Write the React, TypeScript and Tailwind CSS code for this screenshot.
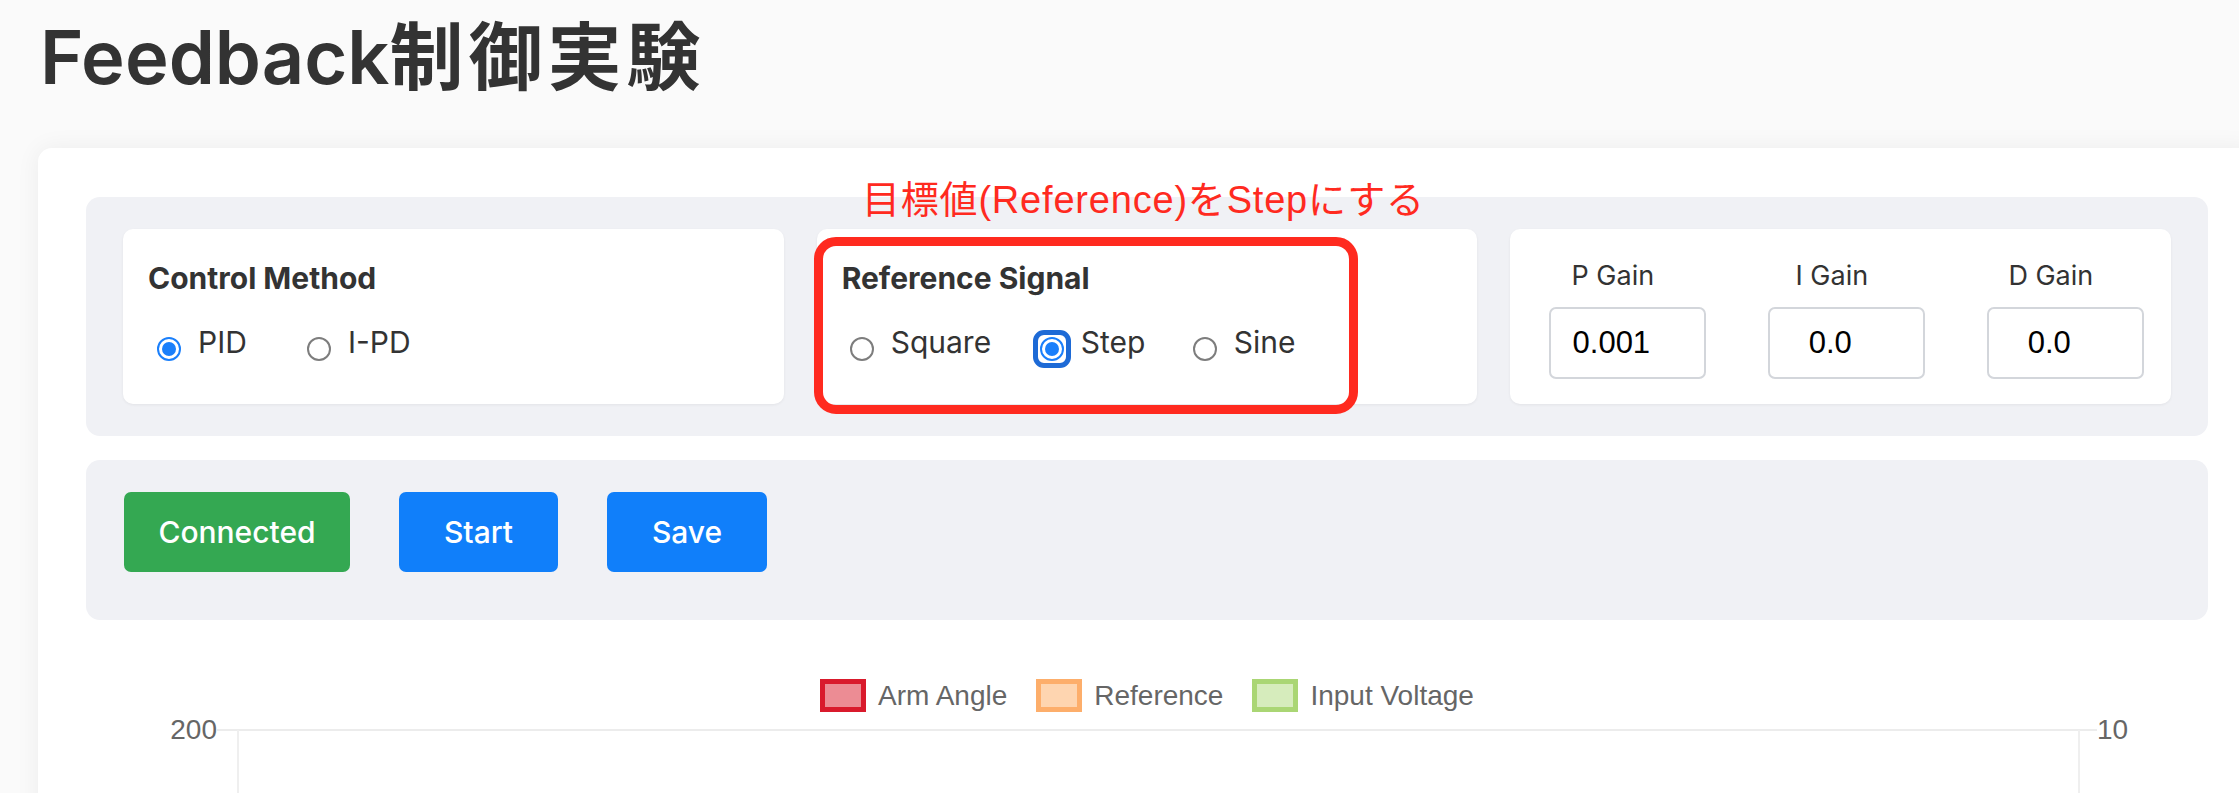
import React from "react";

type RadioProps = { checked?: boolean; focused?: boolean };

const Radio = ({ checked = false, focused = false }: RadioProps) => (
  <span className="relative mt-[12px] flex h-[24px] w-[24px] shrink-0 items-center justify-center">
    {focused && (
      <span className="absolute -inset-[7px] rounded-[11px] border-[5px] border-[#1d6ad6]" />
    )}
    {checked ? (
      <span className="flex h-[24px] w-[24px] items-center justify-center rounded-full border-2 border-[#1a7ffb] bg-white">
        <span className="h-[14px] w-[14px] rounded-full bg-[#1a7ffb]" />
      </span>
    ) : (
      <span className="h-[24px] w-[24px] rounded-full border-2 border-[#7d7d7d] bg-white" />
    )}
  </span>
);

type OptionProps = RadioProps & { label: string; width: string };

const Option = ({ label, width, checked, focused }: OptionProps) => (
  <div className={`flex items-start ${width}`}>
    <Radio checked={checked} focused={focused} />
    <span className="ml-[17px] text-[30px] leading-[35px] text-[#333]">{label}</span>
  </div>
);

const Gain = ({ label, value }: { label: string; value: string }) => (
  <div className="flex w-[157px] flex-col items-center">
    <span className="pr-[30px] text-[27px] leading-[32px] text-[#333]">{label}</span>
    <input
      readOnly
      value={value}
      className="mt-[15px] h-[72px] w-[157px] rounded-[7px] border-2 border-[#d3d6db] bg-white pl-[4px] pr-[37px] text-center font-['Liberation_Sans',sans-serif] text-[31px] text-black outline-none"
    />
  </div>
);

const Legend = ({ label, border, fill }: { label: string; border: string; fill: string }) => (
  <div className="flex items-center">
    <span className={`h-[33px] w-[46px] border-[5px] ${border} ${fill}`} />
    <span className="ml-[12px] text-[28px] leading-[33px] text-[#666]">{label}</span>
  </div>
);

export default function App() {
  return (
    <div className="relative h-[793px] w-full overflow-hidden bg-[#fafafa] font-[Inter,'Noto_Sans_CJK_JP',sans-serif]">
      <h1 className="ml-[40px] mt-[19px] h-[76px] text-[74px] font-semibold leading-[76px] text-[#333] whitespace-nowrap">
        Feedback<span className="tracking-[5px]">制御実験</span>
      </h1>

      <div className="ml-[38px] mt-[53px] w-[2218px] rounded-[14px] bg-white px-[48px] pt-[49px] pb-[40px] shadow-[0_0_24px_rgba(0,0,0,0.06)]">
        {/* settings */}
        <div className="grid grid-cols-3 gap-[33px] rounded-[14px] bg-[#f0f1f5] px-[37px] py-[32px]">
          <div className="h-[175px] rounded-[10px] bg-white pl-[25px] pt-[32px] shadow-[0_1px_3px_rgba(0,0,0,0.06)]">
            <h3 className="text-[30px] font-bold leading-[35px] text-[#333]">Control Method</h3>
            <div className="mt-[29px] flex pl-[9px]">
              <Option label="PID" width="w-[150px]" checked />
              <Option label="I-PD" width="w-[150px]" />
            </div>
          </div>

          <div className="h-[175px] rounded-[10px] bg-white pl-[25px] pt-[32px] shadow-[0_1px_3px_rgba(0,0,0,0.06)]">
            <h3 className="text-[30px] font-bold leading-[35px] text-[#333]">Reference Signal</h3>
            <div className="mt-[29px] flex pl-[8px]">
              <Option label="Square" width="w-[190px]" />
              <Option label="Step" width="w-[153px]" checked focused />
              <Option label="Sine" width="w-[150px]" />
            </div>
          </div>

          <div className="flex h-[175px] gap-[62px] rounded-[10px] bg-white pl-[39px] pt-[31px] shadow-[0_1px_3px_rgba(0,0,0,0.06)]">
            <Gain label="P Gain" value="0.001" />
            <Gain label="I Gain" value="0.0" />
            <Gain label="D Gain" value="0.0" />
          </div>
        </div>

        {/* actions */}
        <div className="mt-[24px] flex h-[160px] items-start gap-[49px] rounded-[14px] bg-[#f0f1f5] pl-[38px] pt-[32px]">
          <button className="h-[80px] w-[226px] rounded-[7px] bg-[#34a852] text-[30px] font-medium text-white">
            Connected
          </button>
          <button className="h-[80px] w-[159px] rounded-[7px] bg-[#107ffa] text-[30px] font-medium text-white">
            Start
          </button>
          <button className="h-[80px] w-[160px] rounded-[7px] bg-[#107ffa] text-[30px] font-medium text-white">
            Save
          </button>
        </div>

        {/* chart */}
        <div className="mt-[59px] flex justify-center gap-[29px] font-['Liberation_Sans',sans-serif]">
          <Legend label="Arm Angle" border="border-[#d91a2c]" fill="bg-[#ec8c94]" />
          <Legend label="Reference" border="border-[#fdae6b]" fill="bg-[#fed5b0]" />
          <Legend label="Input Voltage" border="border-[#aad674]" fill="bg-[#d6ecbc]" />
        </div>
        <svg width="2122" height="90" className="block">
          <line x1="131" y1="18" x2="2011" y2="18" stroke="#ececec" strokeWidth="2" />
          <line x1="152" y1="18" x2="152" y2="90" stroke="#efefef" strokeWidth="2" />
          <line x1="1993" y1="18" x2="1993" y2="90" stroke="#efefef" strokeWidth="2" />
          <text x="131" y="27" textAnchor="end" fontSize="28" fill="#666" fontFamily="Liberation Sans, sans-serif">
            200
          </text>
          <text x="2011" y="27" fontSize="28" fill="#666" fontFamily="Liberation Sans, sans-serif">
            10
          </text>
        </svg>
      </div>

      {/* annotation */}
      <div className="absolute left-[814px] top-[237px] h-[177px] w-[544px] rounded-[22px] border-[9px] border-[#ff2a1f]" />
      <div className="absolute left-[862px] top-[181px] whitespace-nowrap font-['Liberation_Sans','Noto_Sans_CJK_JP',sans-serif] text-[38px] leading-[38px] tracking-[0.8px] text-[#ff2a1f]">
        目標値(Reference)をStepにする
      </div>
    </div>
  );
}
